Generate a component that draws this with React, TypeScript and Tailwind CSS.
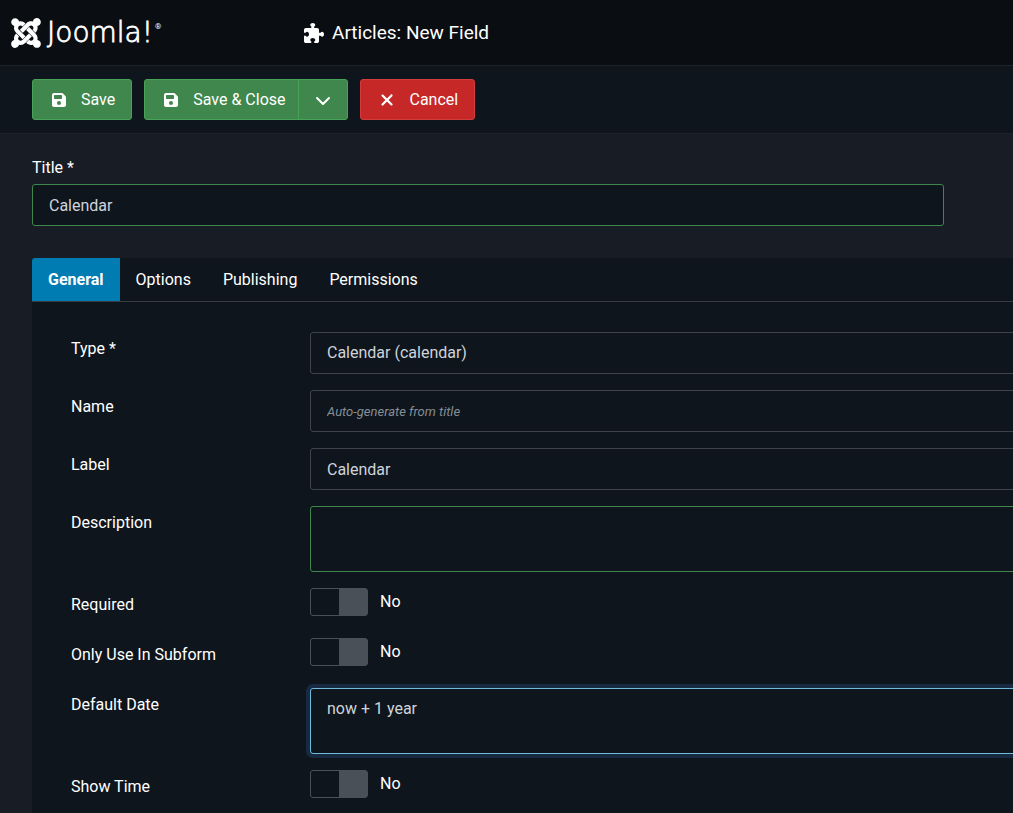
import { useState } from 'react'
import type { ReactNode } from 'react'
import { FaJoomla } from 'react-icons/fa'
import { FaChevronDown, FaFloppyDisk, FaPuzzlePiece, FaXmark } from 'react-icons/fa6'

const TABS = ['General', 'Options', 'Publishing', 'Permissions']

const control =
  'block w-full appearance-none rounded-[3px] border bg-[#0e151c] px-4 text-[#ced4da] outline-none'

function Logo() {
  return (
    <a href="#" aria-label="Joomla!" className="flex w-[304px] shrink-0 items-center gap-0.5 pl-[9px]">
      <FaJoomla className="size-[34px]" />
      <svg viewBox="0 0 120 40" className="h-10 w-[120px]" fill="currentColor">
        <text
          x="2"
          y="29"
          fontFamily="'DejaVu Sans', sans-serif"
          fontWeight="200"
          fontSize="28"
          stroke="currentColor"
          strokeWidth="0.8"
        >
          Joomla!
        </text>
        <text x="110" y="16" fontFamily="Roboto, sans-serif" fontSize="8">
          ®
        </text>
      </svg>
    </a>
  )
}

function Row({ id, label, children }: { id: string; label: string; children: ReactNode }) {
  return (
    <div className="flex items-start">
      <label htmlFor={id} className="w-[239px] shrink-0 py-[5px]">
        {label}
      </label>
      <div className="min-w-0 flex-1">{children}</div>
    </div>
  )
}

function Toggle({ id, label }: { id: string; label: string }) {
  const [on, setOn] = useState(false)

  return (
    <Row id={id} label={label}>
      <div className="flex h-7 items-center gap-3">
        <input
          id={id}
          type="checkbox"
          role="switch"
          checked={on}
          onChange={(e) => setOn(e.target.checked)}
          className="h-7 w-[58px] appearance-none rounded-[3px] border border-[#495057] bg-linear-to-r from-[#0e151c] from-50% to-[#495057] to-50% checked:from-[#3f874c] checked:to-[#0e151c]"
        />
        <span>{on ? 'Yes' : 'No'}</span>
      </div>
    </Row>
  )
}

export default function App() {
  const [tab, setTab] = useState('General')

  return (
    <div className="min-h-screen overflow-x-hidden bg-[#181c24] font-[Roboto,sans-serif] text-base text-white">
      {/* Header */}
      <header className="flex h-[66px] items-center border-b border-[#1c232a] bg-[#0a0d12]">
        <Logo />
        <h1 className="flex items-center gap-2 text-[19px] leading-[27px]">
          <FaPuzzlePiece className="size-5" />
          Articles: New Field
        </h1>
      </header>

      {/* Toolbar */}
      <div className="flex gap-3 border-b border-[#1c232a] bg-[#0e151c] px-8 py-[13px]">
        <button className="flex h-[41px] items-center gap-[14px] rounded-[3px] border border-[#46a358] bg-[#3f874c] pr-4 pl-[18px]">
          <FaFloppyDisk className="size-4" />
          Save
        </button>
        <div className="flex h-[41px] overflow-hidden rounded-[3px] border border-[#46a358] bg-[#3f874c]">
          <button className="flex items-center gap-[14px] pr-3 pl-[18px]">
            <FaFloppyDisk className="size-4" />
            Save &amp; Close
          </button>
          <button aria-label="More save options" className="flex w-[49px] items-center justify-center border-l border-[#46a358]">
            <FaChevronDown className="size-4" />
          </button>
        </div>
        <button className="flex h-[41px] items-center gap-[14px] rounded-[3px] border border-[#d33c3c] bg-[#c52827] pr-4 pl-[17px]">
          <FaXmark className="size-[18px]" />
          Cancel
        </button>
      </div>

      <main className="pt-[22px] pl-8">
        <div className="max-w-[944px] pr-8">
          <label htmlFor="title" className="mb-1 block">
            Title *
          </label>
          <input id="title" defaultValue="Calendar" className={`${control} h-[42px] border-[#3f874c]`} />
        </div>

        {/* Tabs */}
        <div role="tablist" className="mt-8 flex rounded-tl-[3px] border-b border-[#373b43] bg-[#0e151c]">
          {TABS.map((name) => (
            <button
              key={name}
              role="tab"
              aria-selected={tab === name}
              onClick={() => setTab(name)}
              className={`h-[43px] px-4 ${tab === name ? 'rounded-tl-[3px] bg-[#007cb2] font-bold' : ''}`}
            >
              {name}
            </button>
          ))}
        </div>

        {/* Fields run past the right edge of the panel */}
        <div className="bg-[#0e151c] pt-[30px] pb-4 pl-[39px]">
          <form className="-mr-2 flex flex-col gap-4">
            <Row id="type" label="Type *">
              <select id="type" className={`${control} h-[42px] border-[#3f444c]`}>
                <option>Calendar (calendar)</option>
              </select>
            </Row>
            <Row id="name" label="Name">
              <input
                id="name"
                placeholder="Auto-generate from title"
                className={`${control} h-[42px] border-[#3f444c] placeholder:text-[#868e96] placeholder-shown:text-[13px] placeholder-shown:italic`}
              />
            </Row>
            <Row id="label" label="Label">
              <input id="label" defaultValue="Calendar" className={`${control} h-[42px] border-[#3f444c]`} />
            </Row>
            <Row id="description" label="Description">
              <textarea id="description" className={`${control} h-[66px] resize-none border-[#3f874c] py-2`} />
            </Row>
            <Toggle id="required" label="Required" />
            <Toggle id="subform" label="Only Use In Subform" />
            <Row id="default-date" label="Default Date">
              <textarea
                id="default-date"
                defaultValue="now + 1 year"
                className={`${control} h-[66px] resize-none border-[#6fbbdb] py-2 ring-4 ring-[#172a42]`}
              />
            </Row>
            <Toggle id="show-time" label="Show Time" />
          </form>
        </div>
      </main>
    </div>
  )
}
